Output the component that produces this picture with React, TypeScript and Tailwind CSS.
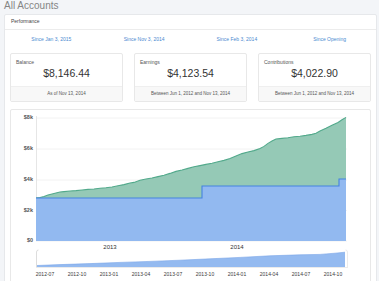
const FONT = "font-['Liberation_Sans','Helvetica','Arial',sans-serif]";

const periods = ['Since Jan 3, 2015', 'Since Nov 3, 2014', 'Since Feb 3, 2014', 'Since Opening'];

const cards = [
  { label: 'Balance', value: '$8,146.44', note: 'As of Nov 13, 2014' },
  { label: 'Earnings', value: '$4,123.54', note: 'Between Jun 1, 2012 and Nov 13, 2014' },
  { label: 'Contributions', value: '$4,022.90', note: 'Between Jun 1, 2012 and Nov 13, 2014' },
];

// page coordinates, the svg viewBox is offset to match
const green: [number, number][] = [
  [36, 198], [40, 197.5], [44, 196.5], [48, 195], [52, 194], [56, 193], [60, 192], [64, 191.6],
  [70, 191], [76, 190.6], [82, 190], [88, 189.4], [94, 189], [100, 188.2], [106, 187.8], [112, 187],
  [118, 185.8], [124, 184.6], [130, 183], [134, 182.4], [140, 180.2], [146, 179], [152, 178],
  [158, 176.6], [164, 175.2], [170, 173.4], [176, 171.4], [182, 170], [188, 168.4], [194, 166.8],
  [200, 165.6], [206, 164.4], [212, 163.2], [218, 161.8], [224, 160.4], [230, 158.6], [236, 156],
  [242, 153.6], [248, 152], [254, 150.6], [260, 148.4], [264, 146.4], [268, 143.4], [272, 141],
  [276, 139], [282, 138.4], [288, 137.8], [294, 136.8], [300, 136.2], [306, 135.4], [312, 134.4],
  [316, 133.2], [320, 131], [326, 128.2], [332, 125.2], [338, 122.4], [342, 119.8], [346, 117.4],
];

const blue: [number, number][] = [
  [36, 198], [202, 198], [202, 186], [339, 186], [339, 179], [346, 179],
];

const nav: [number, number][] = [
  [37, 265.5], [60, 264.6], [90, 263.6], [120, 262.4], [150, 261.4], [180, 260.2], [210, 258.8],
  [240, 257.4], [270, 255.8], [300, 254.8], [320, 254.4], [335, 253.2], [345, 252.2],
];

const pts = (p: [number, number][]) => p.map(([x, y]) => `${x},${y}`).join(' ');

const yTicks = [
  { label: '$8k', y: 118 },
  { label: '$6k', y: 149 },
  { label: '$4k', y: 180 },
  { label: '$2k', y: 210.5 },
  { label: '$0', y: 241 },
];

const navLabels = ['2012-07', '2012-10', '2013-01', '2013-04', '2013-07', '2013-10', '2014-01', '2014-04', '2014-07', '2014-10'];

function Chart() {
  const svgFont = "'Liberation Sans', Arial, sans-serif";
  return (
    <svg width={360} height={171} viewBox="11 110 360 171" className="block">
      {yTicks.map((t) => (
        <g key={t.label}>
          <line x1={36} x2={347} y1={t.y} y2={t.y} stroke="#efefef" strokeWidth={0.8} />
          <text x={33} y={t.y} textAnchor="end" dominantBaseline="middle" fontSize={5.5} fill="#555" fontFamily={svgFont} fontWeight={700}>
            {t.label}
          </text>
        </g>
      ))}
      <line x1={36.5} x2={36.5} y1={116} y2={241} stroke="#e0e0e0" strokeWidth={0.8} />

      <polygon points={`${pts(green)} 346,241 36,241`} fill="#95c9b6" />
      <polyline points={pts(green)} fill="none" stroke="#52a98b" strokeWidth={1.1} />

      <polygon points={`${pts(blue)} 346,241 36,241`} fill="#92b9f0" />
      <polyline points={pts(blue)} fill="none" stroke="#4583e0" strokeWidth={1.1} />

      <text x={110} y={247.5} textAnchor="middle" dominantBaseline="middle" fontSize={6} fill="#333" fontFamily={svgFont}>2013</text>
      <text x={237} y={247.5} textAnchor="middle" dominantBaseline="middle" fontSize={6} fill="#333" fontFamily={svgFont}>2014</text>

      {/* navigator */}
      <polygon points={`${pts(nav)} 345,267 37,267`} fill="#94baf0" />
      <polyline points={pts(nav)} fill="none" stroke="#78a5e8" strokeWidth={0.6} />
      <path d="M38.5,250 Q36.5,250 36.5,252 L36.5,267" fill="none" stroke="#d4d4d4" strokeWidth={0.8} />
      <path d="M345.5,250 Q347.5,250 347.5,252 L347.5,267" fill="none" stroke="#e6e6e6" strokeWidth={0.8} />
      <line x1={36} x2={348} y1={267.5} y2={267.5} stroke="#dddddd" strokeWidth={0.6} />
      {navLabels.map((l, i) => (
        <text key={l} x={45 + i * 32} y={275} textAnchor="middle" dominantBaseline="middle" fontSize={5} fill="#3a3a3a" fontFamily={svgFont}>
          {l}
        </text>
      ))}
    </svg>
  );
}

export default function App() {
  return (
    <div className={`w-[379px] h-[281px] overflow-hidden bg-[#f3f5f8] pl-[4px] ${FONT}`}>
      <h1 className="h-[14px] text-[10px] leading-[12px] text-[#858585]">All Accounts</h1>
      <div className="w-[373px] bg-white border border-[#e6e8eb] rounded-t-[2px]">
        <div className="h-[15px] px-[6px] flex items-center text-[5px] text-[#444] border-b border-[#ececec]">
          Performance
        </div>
        <div className="grid grid-cols-4 h-[20px] items-center text-center text-[5px] text-[#4a8ad0]">
          {periods.map((p) => (
            <span key={p}>{p}</span>
          ))}
        </div>
        <div className="flex gap-[11px] px-[5px] mt-[3px]">
          {cards.map((c) => (
            <div key={c.label} className="w-[113px] border border-[#e8e8e8] rounded-[2px] bg-white">
              <div className="h-[32px] pt-[5px] px-[5px]">
                <div className="text-[5px] leading-[6px] text-[#555]">{c.label}</div>
                <div className="mt-[1px] text-center text-[10.5px] leading-[14px] text-[#333]">{c.value}</div>
              </div>
              <div className="h-[15px] border-t border-[#efefef] bg-[#f8f8f8] flex items-center justify-center text-[4.5px] text-[#555]">
                {c.note}
              </div>
            </div>
          ))}
        </div>
        <div className="mt-[7px] mx-[5px] border border-[#e8e8e8] rounded-[2px] bg-white h-[200px]">
          <Chart />
        </div>
      </div>
    </div>
  );
}
